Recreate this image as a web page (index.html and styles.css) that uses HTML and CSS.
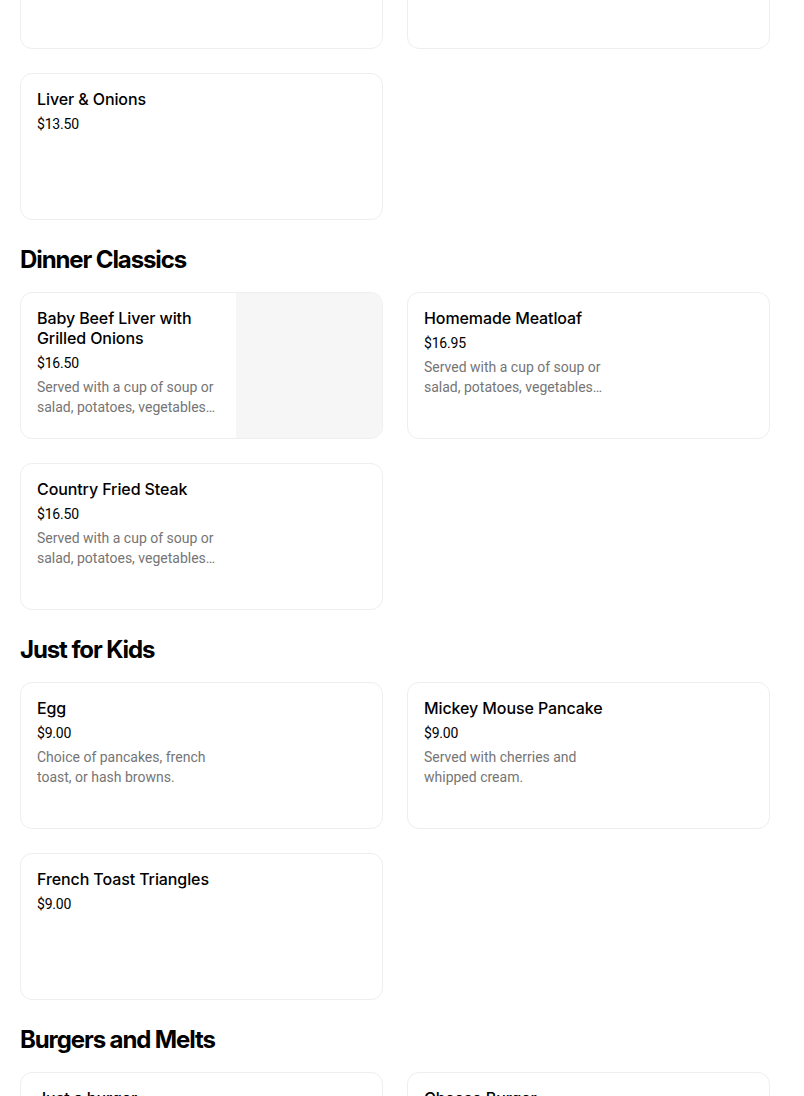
FILE: index.html
```html
<!DOCTYPE html>
<html lang="en">
<head>
<meta charset="utf-8">
<title>Menu</title>
<link rel="stylesheet" href="styles.css">
</head>
<body>
<main class="menu">
  <section class="section section-prev">
    <div class="grid">
      <div class="card"><div class="info"></div></div>
      <div class="card"><div class="info"></div></div>
      <div class="card">
        <div class="info">
          <div class="title">Liver &amp; Onions</div>
          <div class="price">$13.50</div>
        </div>
      </div>
    </div>
  </section>

  <section class="section">
    <h2 class="heading">Dinner Classics</h2>
    <div class="grid">
      <div class="card">
        <div class="info">
          <div class="title">Baby Beef Liver with Grilled Onions</div>
          <div class="price">$16.50</div>
          <div class="desc">Served with a cup of soup or salad, potatoes, vegetables and bread.</div>
        </div>
        <div class="thumb"></div>
      </div>
      <div class="card">
        <div class="info">
          <div class="title">Homemade Meatloaf</div>
          <div class="price">$16.95</div>
          <div class="desc">Served with a cup of soup or salad, potatoes, vegetables and bread.</div>
        </div>
      </div>
      <div class="card">
        <div class="info">
          <div class="title">Country Fried Steak</div>
          <div class="price">$16.50</div>
          <div class="desc">Served with a cup of soup or salad, potatoes, vegetables and bread.</div>
        </div>
      </div>
    </div>
  </section>

  <section class="section">
    <h2 class="heading">Just for Kids</h2>
    <div class="grid">
      <div class="card">
        <div class="info">
          <div class="title">Egg</div>
          <div class="price">$9.00</div>
          <div class="desc">Choice of pancakes, french toast, or hash browns.</div>
        </div>
      </div>
      <div class="card">
        <div class="info">
          <div class="title">Mickey Mouse Pancake</div>
          <div class="price">$9.00</div>
          <div class="desc">Served with cherries and whipped cream.</div>
        </div>
      </div>
      <div class="card">
        <div class="info">
          <div class="title">French Toast Triangles</div>
          <div class="price">$9.00</div>
        </div>
      </div>
    </div>
  </section>

  <section class="section">
    <h2 class="heading">Burgers and Melts</h2>
    <div class="grid">
      <div class="card">
        <div class="info">
          <div class="title">Just a burger</div>
          <div class="price">$12.00</div>
        </div>
      </div>
      <div class="card">
        <div class="info">
          <div class="title">Cheese Burger</div>
          <div class="price">$13.00</div>
        </div>
      </div>
    </div>
  </section>
</main>
</body>
</html>
```

FILE: styles.css
```css
* { box-sizing: border-box; }
html, body { margin: 0; padding: 0; background: #fff; }
body {
  font-family: Inter, "Noto Sans", "Liberation Sans", sans-serif;
  color: #000;
  overflow: hidden;
}
.menu {
  width: 770px;
  padding-left: 20px;
  margin-top: -98px;
  display: flex;
  flex-direction: column;
  gap: 24px;
}
.section { display: flex; flex-direction: column; }
.heading {
  margin: 0 0 16px;
  font-size: 24px;
  line-height: 32px;
  font-weight: 700;
  letter-spacing: -1.1px;
}
.grid {
  display: grid;
  grid-template-columns: 363px 363px;
  gap: 24px;
}
.card {
  display: flex;
  min-height: 147px;
  border: 1px solid #eeeeee;
  border-radius: 12px;
  overflow: hidden;
  background: #fff;
}
.info {
  width: 216px;
  padding: 15px 16px 16px;
  display: flex;
  flex-direction: column;
}
.title {
  font-size: 16px;
  line-height: 20px;
  font-weight: 500;
  letter-spacing: -0.1px;
}
.price {
  margin-top: 5px;
  font-family: Roboto, "Liberation Sans", sans-serif;
  font-size: 14px;
  line-height: 20px;
  letter-spacing: -0.2px;
}
.desc {
  margin-top: 4px;
  font-family: Roboto, "Liberation Sans", sans-serif;
  font-size: 14px;
  line-height: 20px;
  color: #757575;
  display: -webkit-box;
  -webkit-line-clamp: 2;
  -webkit-box-orient: vertical;
  overflow: hidden;
}
.thumb {
  margin-left: auto;
  width: 146px;
  align-self: stretch;
  background: #f6f6f6;
}
```
